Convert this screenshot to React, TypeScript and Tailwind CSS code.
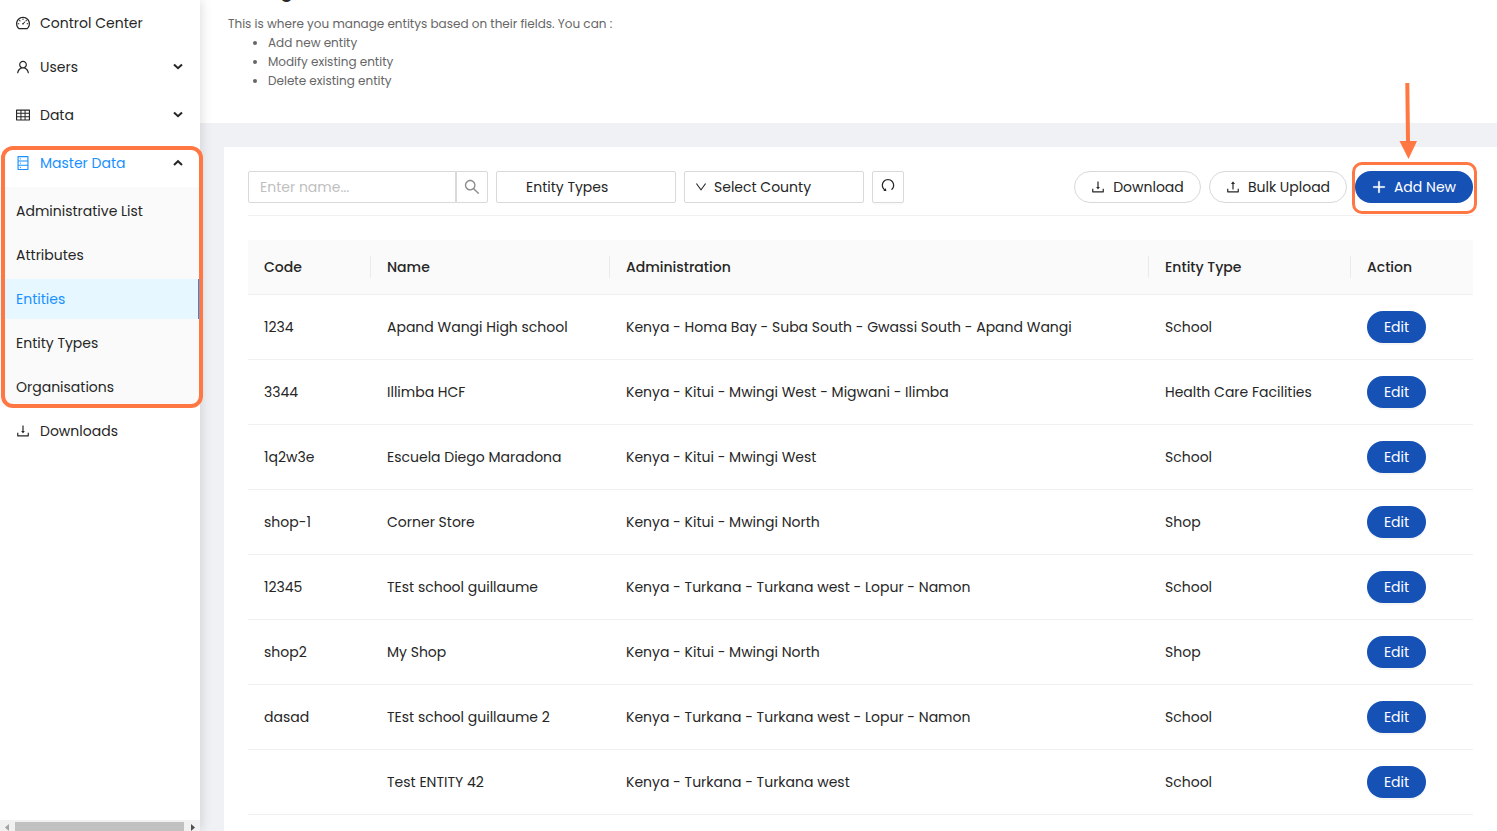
import React, { useState } from "react";
import type { IconType } from "react-icons";
import {
  AiOutlineDashboard,
  AiOutlineDatabase,
  AiOutlineDown,
  AiOutlineDownload,
  AiOutlinePlus,
  AiOutlineSearch,
  AiOutlineTable,
  AiOutlineUndo,
  AiOutlineUpload,
  AiOutlineUser,
} from "react-icons/ai";

type Entity = {
  code: string;
  name: string;
  administration: string;
  type: string;
};

const entities: Entity[] = [
  {
    code: "1234",
    name: "Apand Wangi High school",
    administration: "Kenya - Homa Bay - Suba South - Gwassi South - Apand Wangi",
    type: "School",
  },
  {
    code: "3344",
    name: "Illimba HCF",
    administration: "Kenya - Kitui - Mwingi West - Migwani - Ilimba",
    type: "Health Care Facilities",
  },
  {
    code: "1q2w3e",
    name: "Escuela Diego Maradona",
    administration: "Kenya - Kitui - Mwingi West",
    type: "School",
  },
  {
    code: "shop-1",
    name: "Corner Store",
    administration: "Kenya - Kitui - Mwingi North",
    type: "Shop",
  },
  {
    code: "12345",
    name: "TEst school guillaume",
    administration: "Kenya - Turkana - Turkana west - Lopur - Namon",
    type: "School",
  },
  {
    code: "shop2",
    name: "My Shop",
    administration: "Kenya - Kitui - Mwingi North",
    type: "Shop",
  },
  {
    code: "dasad",
    name: "TEst school guillaume 2",
    administration: "Kenya - Turkana - Turkana west - Lopur - Namon",
    type: "School",
  },
  {
    code: "",
    name: "Test ENTITY 42",
    administration: "Kenya - Turkana - Turkana west",
    type: "School",
  },
];

const masterDataLinks = ["Administrative List", "Attributes", "Entities", "Entity Types", "Organisations"];

// crop the empty margin that the icon set leaves round each glyph
const Icon: React.FC<{ of: IconType; size?: number; bold?: boolean }> = ({ of: Glyph, size = 14, bold }) => (
  <Glyph size={size} viewBox="64 64 896 896" strokeWidth={bold ? 40 : 0} className="shrink-0" aria-hidden="true" />
);

const Chevron: React.FC<{ open?: boolean }> = ({ open }) => (
  <svg width="10" height="8" viewBox="0 0 10 8" fill="none" stroke="#262626" strokeWidth="2" aria-hidden="true">
    <path d={open ? "M1 6 L5 2.2 L9 6" : "M1 1.4 L5 5.2 L9 1.4"} />
  </svg>
);

const MenuLink: React.FC<{ icon: IconType; label: string }> = ({ icon, label }) => (
  <a href="#" className="flex h-10 items-center gap-[10px] px-4">
    <Icon of={icon} />
    {label}
  </a>
);

const MenuGroup: React.FC<{
  icon: IconType;
  label: string;
  open?: boolean;
  onClick?: () => void;
}> = ({ icon, label, open, onClick }) => (
  <button
    onClick={onClick}
    aria-expanded={!!open}
    className={
      open
        ? "flex h-10 w-full items-center gap-[10px] pr-[17px] pl-4 text-[#1890ff]"
        : "flex h-10 w-full items-center gap-[10px] pr-[17px] pl-4"
    }
  >
    <Icon of={icon} />
    <span className="grow text-left">{label}</span>
    <Chevron open={open} />
  </button>
);

const Sidebar: React.FC = () => {
  const [masterOpen, setMasterOpen] = useState(true);

  return (
    <aside className="z-10 flex w-[200px] shrink-0 flex-col justify-between bg-white shadow-[2px_0_10px_rgba(0,0,0,0.12)]">
      <nav className="pt-[3px]">
        <MenuLink icon={AiOutlineDashboard} label="Control Center" />
        <div className="mt-1 flex flex-col gap-2">
          <MenuGroup icon={AiOutlineUser} label="Users" />
          <MenuGroup icon={AiOutlineTable} label="Data" />
          <div className="relative">
            <MenuGroup
              icon={AiOutlineDatabase}
              label="Master Data"
              open={masterOpen}
              onClick={() => setMasterOpen(!masterOpen)}
            />
            {masterOpen && (
              <ul className="mt-1 flex flex-col gap-1 bg-[#fafafa] pt-1">
                {masterDataLinks.map((link) => (
                  <li key={link}>
                    <a
                      href="#"
                      className={
                        link === "Entities"
                          ? "flex h-10 items-center border-r-2 border-[#1890ff] bg-[#e6f7ff] px-4 text-[#1890ff]"
                          : "flex h-10 items-center px-4"
                      }
                    >
                      {link}
                    </a>
                  </li>
                ))}
              </ul>
            )}
            <div className="pointer-events-none absolute top-[3px] -right-[3px] -bottom-px left-[1px] rounded-xl border-4 border-[#ff7743]" />
          </div>
        </div>
        <div className="mt-1">
          <MenuLink icon={AiOutlineDownload} label="Downloads" />
        </div>
      </nav>

      {/* horizontal scroll track */}
      <div className="flex h-[11px] items-end justify-between bg-[#f1f1f1]">
        <svg width="15" height="9" viewBox="0 0 15 9" aria-hidden="true">
          <path d="M9 2 V9 L5 5.5 Z" fill="#a3a3a3" />
        </svg>
        <div className="h-[9px] grow bg-[#c1c1c1]" />
        <svg width="16" height="9" viewBox="0 0 16 9" aria-hidden="true">
          <path d="M7 2 V9 L11 5.5 Z" fill="#505050" />
        </svg>
      </div>
    </aside>
  );
};

const Toolbar: React.FC = () => {
  const [name, setName] = useState("");

  return (
    <div className="flex items-center justify-between border-b border-[#f0f0f0] pb-3">
      <div className="flex gap-2">
        <div className="flex">
          <input
            type="text"
            aria-label="Entity name"
            placeholder="Enter name..."
            value={name}
            onChange={(e) => setName(e.target.value)}
            className="h-8 w-[208px] rounded-l-xs border border-[#d9d9d9] px-[11px] placeholder:text-[#bfbfbf] focus:outline-none"
          />
          <button
            aria-label="Search"
            className="flex h-8 w-8 items-center justify-center rounded-r-xs border border-[#d9d9d9] text-[#8c8c8c]"
          >
            <Icon of={AiOutlineSearch} size={16} />
          </button>
        </div>
        <select
          aria-label="Entity type"
          className="h-8 w-[180px] appearance-none rounded-xs border border-[#d9d9d9] bg-white pl-[29px]"
        >
          <option>Entity Types</option>
        </select>
        <label className="flex h-8 w-[180px] items-center gap-[7px] rounded-xs border border-[#d9d9d9] bg-white pl-[10px]">
          <Icon of={AiOutlineDown} size={12} />
          <select aria-label="County" className="grow appearance-none bg-transparent">
            <option>Select County</option>
          </select>
        </label>
        <button
          aria-label="Reset filters"
          className="flex h-8 w-8 items-center justify-center rounded-xs border border-[#d9d9d9] pb-1 shadow-[0_2px_0_rgba(0,0,0,0.02)]"
        >
          <Icon of={AiOutlineUndo} />
        </button>
      </div>
      <div className="flex gap-2">
        <button className="flex h-8 w-[127px] items-center justify-center gap-2 rounded-full border border-[#d9d9d9]">
          <Icon of={AiOutlineDownload} />
          Download
        </button>
        <button className="flex h-8 w-[138px] items-center justify-center gap-2 rounded-full border border-[#d9d9d9]">
          <Icon of={AiOutlineUpload} />
          Bulk Upload
        </button>
        <div className="relative">
          <button className="flex h-8 w-[118px] items-center justify-center gap-2 rounded-full bg-[#1651b6] text-white">
            <Icon of={AiOutlinePlus} bold />
            Add New
          </button>
          <div className="pointer-events-none absolute -top-[9px] -right-1 -bottom-[11px] -left-[3px] rounded-[10px] border-3 border-[#ff7743]" />
          <svg
            className="pointer-events-none absolute right-14 bottom-11"
            width="18"
            height="76"
            viewBox="0 0 18 76"
            fill="#ff7743"
            aria-hidden="true"
          >
            <path d="M6.3 0 H10.3 L11 58 H18 L9.5 76 L0.5 58 H7 Z" />
          </svg>
        </div>
      </div>
    </div>
  );
};

const EntityTable: React.FC = () => (
  <table className="mt-6 w-full table-fixed border-collapse text-left">
    <thead className="bg-[#fafafa]">
      <tr className="h-[54px] border-b border-[#f0f0f0]">
        <th className="w-[123px] font-medium">
          <div className="border-r border-[#ebebeb] px-4">Code</div>
        </th>
        <th className="w-[239px] font-medium">
          <div className="border-r border-[#ebebeb] px-4">Name</div>
        </th>
        <th className="font-medium">
          <div className="border-r border-[#ebebeb] px-4">Administration</div>
        </th>
        <th className="w-[202px] font-medium">
          <div className="border-r border-[#ebebeb] px-4">Entity Type</div>
        </th>
        <th className="w-[122px] font-medium">
          <div className="px-4">Action</div>
        </th>
      </tr>
    </thead>
    <tbody>
      {entities.map((entity, i) => (
        <tr key={i} className="h-[65px] border-b border-[#f0f0f0]">
          <td className="px-4">{entity.code}</td>
          <td className="px-4">{entity.name}</td>
          <td className="px-4">{entity.administration}</td>
          <td className="px-4">{entity.type}</td>
          <td className="px-4">
            <button className="block h-8 w-[59px] rounded-full bg-[#1651b6] text-white shadow-[0_2px_0_rgba(0,0,0,0.04)]">
              Edit
            </button>
          </td>
        </tr>
      ))}
    </tbody>
  </table>
);

const App: React.FC = () => {
  return (
    <div className="flex h-screen overflow-hidden bg-[#f0f1f5] font-['Poppins','Inter',sans-serif] text-sm leading-[22px] text-[#262626]">
      <Sidebar />
      <main className="flex min-w-0 grow flex-col">
        <header className="flex h-[123px] shrink-0 flex-col justify-end overflow-hidden bg-white px-7 pb-[33px] text-xs leading-[19px] text-[#666666]">
          <h1 className="mb-[9px] text-lg leading-7 font-semibold text-[#262626]">Manage Entities</h1>
          <p>This is where you manage entitys based on their fields. You can :</p>
          <ul className="list-disc pl-10">
            <li>Add new entity</li>
            <li>Modify existing entity</li>
            <li>Delete existing entity</li>
          </ul>
        </header>
        <section className="mt-6 ml-6 grow bg-white p-6">
          <Toolbar />
          <EntityTable />
        </section>
      </main>
    </div>
  );
};

export default App;
